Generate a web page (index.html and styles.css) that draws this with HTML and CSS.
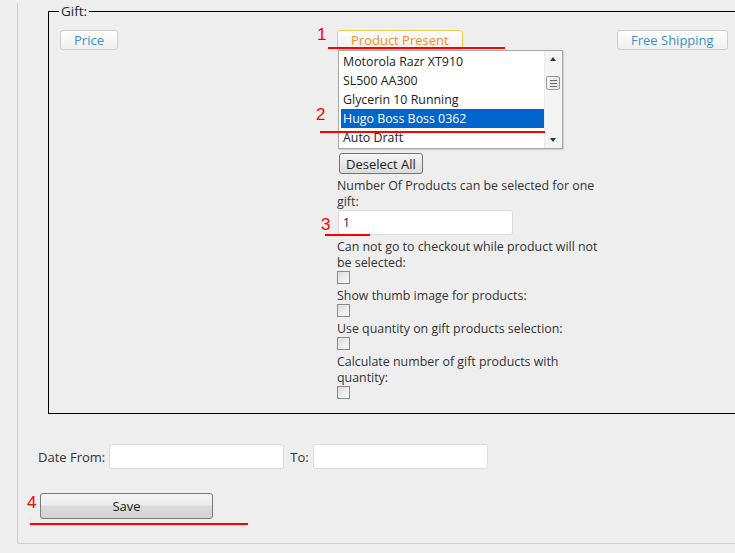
FILE: index.html
```html
<!DOCTYPE html>
<html lang="en">
<head>
  <meta charset="UTF-8">
  <meta name="viewport" content="width=device-width, initial-scale=1.0">
  <title>Gift settings</title>
  <link rel="stylesheet" href="styles.css">
</head>
<body>
  <div class="panel">
    <fieldset class="gift">
      <legend>Gift:</legend>
      <div class="gift-row">
        <div class="col-left">
          <button class="tab">Price</button>
        </div>

        <div class="col-mid">
          <button class="tab tab-active">Product Present</button>

          <div class="listbox">
            <div class="options">
              <div class="option">Motorola Razr XT910</div>
              <div class="option">SL500 AA300</div>
              <div class="option">Glycerin 10 Running</div>
              <div class="option selected">Hugo Boss Boss 0362</div>
              <div class="option">Auto Draft</div>
            </div>
            <div class="scrollbar">
              <span class="arrow arrow-up"></span>
              <span class="thumb"><i></i><i></i><i></i></span>
              <span class="arrow arrow-down"></span>
            </div>
          </div>

          <button class="btn-small">Deselect All</button>

          <div class="field">
            <label>Number Of Products can be selected for one gift:</label>
            <input class="text-input" type="text" value="1">
          </div>
          <div class="field after-input">
            <label>Can not go to checkout while product will not be selected:</label>
            <span class="checkbox"></span>
          </div>
          <div class="field">
            <label>Show thumb image for products:</label>
            <span class="checkbox"></span>
          </div>
          <div class="field">
            <label>Use quantity on gift products selection:</label>
            <span class="checkbox"></span>
          </div>
          <div class="field">
            <label>Calculate number of gift products with quantity:</label>
            <span class="checkbox"></span>
          </div>
        </div>

        <div class="col-right">
          <button class="tab">Free Shipping</button>
        </div>
      </div>
    </fieldset>

    <div class="dates">
      <label>Date From:</label>
      <input class="text-input date-input" type="text">
      <label class="to-label">To:</label>
      <input class="text-input date-input" type="text">
    </div>

    <button class="save">Save</button>
  </div>
  <div class="panel-next"></div>

  <!-- Red annotation marks -->
  <span class="mark-num n1">1</span>
  <span class="mark-line l1"></span>
  <span class="mark-num n2">2</span>
  <span class="mark-line l2"></span>
  <span class="mark-num n3">3</span>
  <span class="mark-line l3"></span>
  <span class="mark-num n4">4</span>
  <span class="mark-line l4"></span>
</body>
</html>
```

FILE: styles.css
```css
body {
  margin: 0;
  background-color: #eeeeee;
  font-family: 'Open Sans', 'DejaVu Sans', sans-serif;
  font-size: 12.4px;
  color: #333;
  position: relative;
  width: 735px;
  height: 553px;
  overflow: hidden;
}

.panel {
  margin-left: 17px;
  height: 541px;
  box-sizing: border-box;
  border-left: 1px solid #d0d0d0;
  border-bottom: 1px solid #d0d0d0;
  border-bottom-left-radius: 3px;
}

.panel-next {
  margin: 10px 0 0 17px;
  border-top: 1px solid #d0d0d0;
}

/* Gift fieldset (its right edge runs off the page) */
.gift {
  margin: 3px 0 0 30px;
  padding: 11px 10px 14px 10px;
  border: 1px solid #000;
  border-right: none;
  min-width: 0;
}

.gift legend {
  padding: 0 2px;
  font-size: 13.5px;
  line-height: 16px;
  color: #2a2a2a;
}

.gift-row {
  display: flex;
}

.col-left {
  width: 278px;
  flex-shrink: 0;
}

.col-mid {
  width: 268px;
  flex-shrink: 0;
  display: flex;
  flex-direction: column;
  align-items: flex-start;
}

.col-right {
  margin-left: 11px;
  flex-shrink: 0;
}

.tab {
  font-family: inherit;
  font-size: 13px;
  line-height: 18px;
  height: 20px;
  padding: 0 13px;
  margin: 0 0 0 1px;
  border: 1px solid #cfcfcf;
  border-radius: 3px;
  background: linear-gradient(#ffffff, #efefef);
  color: #3a90c8;
  white-space: nowrap;
  cursor: pointer;
}

.col-mid .tab {
  margin-left: 0;
}

.tab-active {
  border-color: #f5cd4e;
  color: #f3901e;
}

/* Product list */
.listbox {
  display: flex;
  width: 225px;
  height: 99px;
  margin: 0 0 0 1px;
  box-sizing: border-box;
  border: 1px solid #a8a8a8;
  background-color: #fff;
  box-shadow: 1px 1px 1px rgba(0, 0, 0, 0.12);
  overflow: hidden;
}

.options {
  flex: 1;
  padding: 1px 0 0 2px;
}

.option {
  height: 19px;
  line-height: 19px;
  padding-left: 2px;
  color: #222;
  white-space: nowrap;
}

.option.selected {
  background-color: #0066cc;
  color: #fff;
}

.scrollbar {
  width: 17px;
  position: relative;
  background-color: #f4f4f4;
  border-left: 1px solid #ececec;
}

.arrow {
  position: absolute;
  left: 5px;
  width: 0;
  height: 0;
  border-left: 3px solid transparent;
  border-right: 3px solid transparent;
}

.arrow-up {
  top: 6px;
  border-bottom: 4px solid #333;
}

.arrow-down {
  bottom: 6px;
  border-top: 4px solid #333;
}

.thumb {
  position: absolute;
  top: 25px;
  left: 1px;
  width: 14px;
  height: 14px;
  box-sizing: border-box;
  border: 1px solid #999;
  border-radius: 2px;
  background: linear-gradient(90deg, #f6f6f6, #e2e2e2);
  display: flex;
  flex-direction: column;
  justify-content: center;
  align-items: center;
  gap: 2px;
}

.thumb i {
  display: block;
  width: 7px;
  height: 1px;
  background-color: #666;
}

.btn-small {
  font-family: inherit;
  font-size: 13px;
  height: 21px;
  line-height: 18px;
  padding: 0 6px;
  margin: 4px 0 0 2px;
  border: 1px solid #747474;
  border-radius: 3px;
  background: linear-gradient(#f6f6f6, #dcdcdc);
  color: #222;
}

/* Option fields */
.field {
  display: flex;
  flex-direction: column;
  align-items: flex-start;
}

.field label {
  line-height: 16px;
  margin-top: 4px;
}

.field.after-input label {
  margin-top: 4px;
}

.text-input {
  width: 175px;
  height: 25px;
  box-sizing: border-box;
  margin: 0 0 0 1px;
  padding: 0 4px;
  border: 1px solid #dcdcdc;
  border-radius: 3px;
  background-color: #fff;
  font-family: inherit;
  font-size: 12px;
  color: #222;
}

.checkbox {
  display: block;
  width: 13px;
  height: 13px;
  box-sizing: border-box;
  border: 1px solid #8a8a8a;
  background: linear-gradient(135deg, #dcdcdc, #fbfbfb);
}

/* Dates + save */
.dates {
  display: flex;
  align-items: center;
  margin: 30px 0 0 20px;
}

.dates label {
  font-size: 13px;
  margin-right: 4px;
}

.dates .to-label {
  margin-left: 6px;
}

.date-input {
  margin: 0;
}

.save {
  display: block;
  width: 173px;
  height: 26px;
  margin: 24px 0 0 22px;
  font-family: inherit;
  font-size: 13px;
  border: 1px solid #7a7a7a;
  border-radius: 3px;
  background: linear-gradient(#f4f4f4, #ececec 45%, #dcdcdc 50%, #d2d2d2);
  color: #222;
}

/* Red annotation marks */
.mark-num {
  position: absolute;
  font-family: 'Liberation Sans', sans-serif;
  font-size: 17px;
  line-height: 17px;
  color: #f00;
}

.mark-line {
  position: absolute;
  height: 2px;
  background-color: #f00;
}

.n1 { left: 317px; top: 26px; }
.l1 { left: 328px; top: 47px; width: 177px; }
.n2 { left: 316px; top: 106px; }
.l2 { left: 320px; top: 131px; width: 225px; }
.n3 { left: 321px; top: 216px; }
.l3 { left: 325px; top: 234px; width: 45px; }
.n4 { left: 27px; top: 494px; }
.l4 { left: 30px; top: 523px; width: 218px; }
```
